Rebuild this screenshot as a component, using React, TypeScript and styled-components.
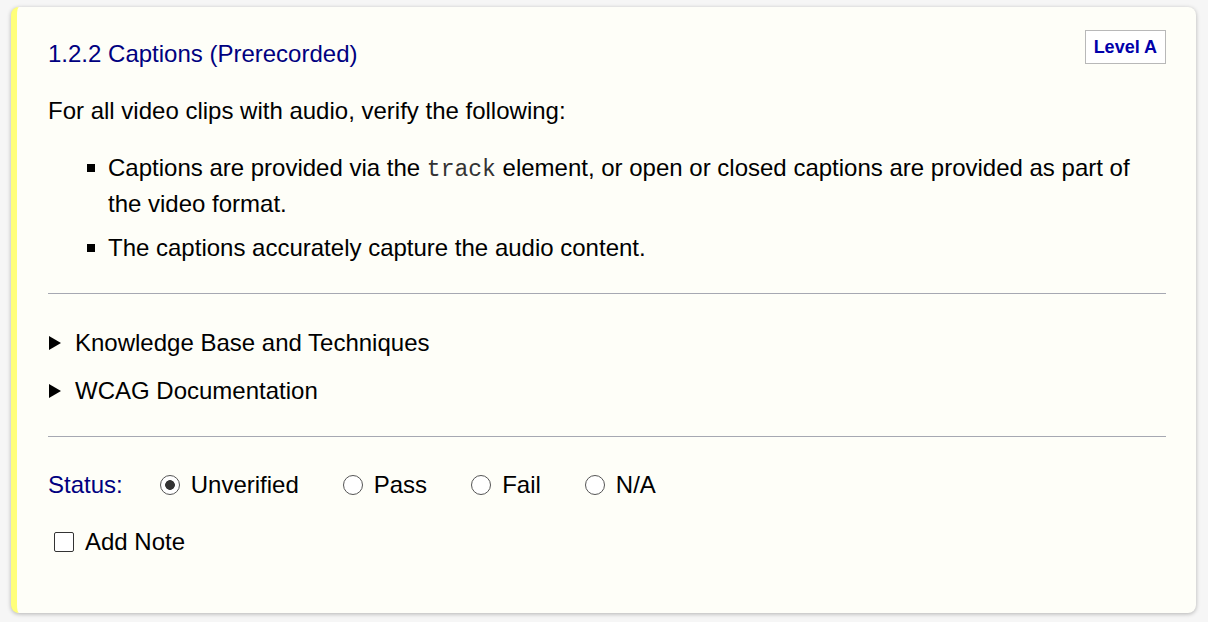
import React from "react";
import styled, { createGlobalStyle } from "styled-components";

const GlobalStyle = createGlobalStyle`
  html, body {
    margin: 0;
    padding: 0;
    background: #f6f6f6;
  }
  body {
    font-family: "Liberation Sans", Arial, sans-serif;
    color: #000;
  }
`;

const Page = styled.div`
  padding: 7px 12px 10px 11px;
`;

const Card = styled.section`
  background: #fefef8;
  border-left: 6px solid #ffff7a;
  border-radius: 8px;
  box-shadow: 0 1px 4px rgba(0, 0, 0, 0.28);
  padding: 23px 30px 30px 31px;
  font-size: 24px;
  line-height: 34px;
`;

const Header = styled.header`
  display: flex;
  justify-content: space-between;
  align-items: flex-start;
`;

const Title = styled.h3`
  margin: 7px 0 0;
  font-size: 24px;
  font-weight: normal;
  line-height: 34px;
  color: #000080;
`;

const Badge = styled.span`
  border: 1px solid #b8b8b8;
  padding: 5px 8px 5px 8px;
  font-size: 18px;
  line-height: 22px;
  font-weight: bold;
  color: #0000aa;
  background: #fff;
`;

const Intro = styled.p`
  margin: 23px 0 0;
`;

const List = styled.ul`
  list-style: none;
  margin: 23px 0 0;
  padding: 0 0 0 60px;
`;

const Item = styled.li`
  position: relative;
  & + & {
    margin-top: 10px;
  }
  &::before {
    content: "";
    position: absolute;
    left: -21px;
    top: 13px;
    width: 8px;
    height: 8px;
    background: #000;
  }
`;

const Code = styled.code`
  font-family: "Liberation Mono", "Courier New", monospace;
  font-size: 23px;
  color: #333;
`;

const Rule = styled.hr`
  border: none;
  border-top: 1px solid #a6a8b2;
  margin: 28px 0 0;
`;

const Disclosures = styled.div`
  display: flex;
  flex-direction: column;
  gap: 14px;
  margin-top: 32px;
`;

const Summary = styled.div`
  display: flex;
  align-items: center;
  gap: 14px;
  padding-left: 1px;
`;

const Triangle = styled.span`
  width: 0;
  height: 0;
  border-left: 12px solid #000;
  border-top: 7px solid transparent;
  border-bottom: 7px solid transparent;
  margin-top: -1px;
`;

const StatusRow = styled.div`
  display: flex;
  align-items: center;
  margin-top: 31px;
`;

const StatusLabel = styled.span`
  color: #000080;
  margin-right: 37px;
`;

const Options = styled.div`
  display: flex;
  align-items: center;
  gap: 44px;
`;

const Option = styled.label`
  display: flex;
  align-items: center;
  gap: 11px;
`;

const Radio = styled.input.attrs({ type: "radio" })`
  appearance: none;
  margin: 0;
  width: 20px;
  height: 20px;
  border-radius: 50%;
  border: 1.5px solid #555;
  background: #fff;
  box-sizing: border-box;
  &:checked {
    background: radial-gradient(circle, #333 0 4.5px, #fff 5.2px);
  }
`;

const NoteRow = styled.label`
  display: flex;
  align-items: center;
  gap: 11px;
  margin-top: 23px;
  margin-bottom: 24px;
  padding-left: 6px;
`;

const Check = styled.input.attrs({ type: "checkbox" })`
  appearance: none;
  margin: 0;
  width: 20px;
  height: 20px;
  box-sizing: border-box;
  border: 1.5px solid #333;
  border-radius: 2px;
  background: #fff;
`;

const statuses = ["Unverified", "Pass", "Fail", "N/A"];

export default function App() {
  return (
    <Page>
      <GlobalStyle />
      <Card>
        <Header>
          <Title>1.2.2 Captions (Prerecorded)</Title>
          <Badge>Level A</Badge>
        </Header>
        <Intro>For all video clips with audio, verify the following:</Intro>
        <List>
          <Item>
            Captions are provided via the <Code>track</Code> element, or open or
            closed captions are provided as part of the video format.
          </Item>
          <Item>The captions accurately capture the audio content.</Item>
        </List>
        <Rule />
        <Disclosures>
          <Summary>
            <Triangle />
            Knowledge Base and Techniques
          </Summary>
          <Summary>
            <Triangle />
            WCAG Documentation
          </Summary>
        </Disclosures>
        <Rule />
        <StatusRow>
          <StatusLabel>Status:</StatusLabel>
          <Options>
            {statuses.map((s, i) => (
              <Option key={s}>
                <Radio name="status" defaultChecked={i === 0} />
                {s}
              </Option>
            ))}
          </Options>
        </StatusRow>
        <NoteRow>
          <Check />
          Add Note
        </NoteRow>
      </Card>
    </Page>
  );
}
